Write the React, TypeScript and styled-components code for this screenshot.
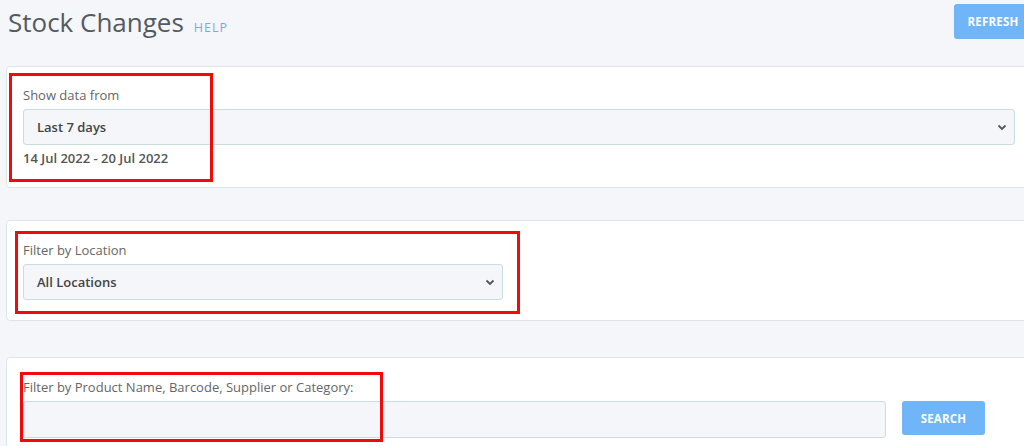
import * as React from "react";
import styled, { createGlobalStyle } from "styled-components";

const GlobalStyle = createGlobalStyle`
    html, body {
        margin: 0;
        padding: 0;
        background: #f4f6fa;
        overflow: hidden;
    }
    body {
        font-family: "Open Sans", "Liberation Sans", sans-serif;
        color: #555;
    }
`;

const Page = styled.div`
    position: relative;
    width: 1026px;
    margin-left: 6px;
    padding-top: 4px;
`;

const Header = styled.div`
    display: flex;
    justify-content: space-between;
    align-items: flex-start;
    height: 35px;
    margin-bottom: 27px;
    padding-left: 2px;
`;

const TitleRow = styled.div`
    display: flex;
    align-items: baseline;
    gap: 10px;
    margin-top: 1px;
`;

const Title = styled.h1`
    margin: 0;
    font-size: 26px;
    font-weight: 400;
    color: #555a60;
    line-height: 34px;
`;

const Help = styled.a`
    font-size: 12.5px;
    letter-spacing: 1px;
    color: #78a8f3;
    text-decoration: none;
`;

const Button = styled.button`
    border: none;
    border-radius: 3px;
    background: #6fb5f8;
    color: #fff;
    font-family: "Open Sans", "Liberation Sans", sans-serif;
    font-size: 11.5px;
    font-weight: 700;
    letter-spacing: 0.2px;
    height: ${props => props.height}px;
    width: ${props => props.width}px;
    padding: 0;
`;

const Card = styled.div`
    background: #fff;
    border: 1px solid #dce6ea;
    border-radius: 4px;
    padding: ${props => props.pad};
    margin-bottom: ${props => props.mb}px;
`;

const Label = styled.div`
    font-size: 13px;
    color: #666;
    line-height: 18px;
    margin-bottom: 5px;
`;

const SelectBox = styled.div`
    display: flex;
    align-items: center;
    justify-content: space-between;
    box-sizing: border-box;
    width: ${props => props.width};
    height: 36px;
    padding: 0 6px 0 13px;
    background: #f4f6fa;
    border: 1px solid #c9dce0;
    border-radius: 3px;
    font-size: 13px;
    font-weight: 600;
    color: #444;
`;

const DateRange = styled.div`
    margin-top: 4px;
    font-size: 13px;
    font-weight: 600;
    color: #555;
    line-height: 18px;
`;

const SearchRow = styled.div`
    display: flex;
    align-items: flex-start;
    gap: 16px;
    padding-right: 30px;
`;

const TextInput = styled.div`
    flex: 1;
    box-sizing: border-box;
    height: 37px;
    background: #f4f6fa;
    border: 1px solid #c9dce0;
    border-radius: 3px;
`;

const Marker = styled.div`
    position: absolute;
    box-sizing: border-box;
    border: 3px solid #f00a0a;
    left: ${props => props.x}px;
    top: ${props => props.y}px;
    width: ${props => props.w}px;
    height: ${props => props.h}px;
`;

const Chevron = () => (
    <svg width="12" height="12" viewBox="0 0 12 12">
        <path d="M2.5 4.5 L6 8 L9.5 4.5" fill="none" stroke="#555" strokeWidth="1.8" />
    </svg>
);

export default function App() {
    return (
        <>
            <GlobalStyle />
            <Page>
                <Header>
                    <TitleRow>
                        <Title>Stock Changes</Title>
                        <Help>HELP</Help>
                    </TitleRow>
                    <Button width={78} height={35}>REFRESH</Button>
                </Header>

                <Card pad="19px 16px 20px 16px" mb={32}>
                    <Label>Show data from</Label>
                    <SelectBox width="992px">
                        <span>Last 7 days</span>
                        <Chevron />
                    </SelectBox>
                    <DateRange>14 Jul 2022 - 20 Jul 2022</DateRange>
                </Card>

                <Card pad="20px 16px 20px 16px" mb={36}>
                    <Label>Filter by Location</Label>
                    <SelectBox width="480px">
                        <span>All Locations</span>
                        <Chevron />
                    </SelectBox>
                </Card>

                <Card pad="20px 16px 20px 16px" mb={0}>
                    <Label>Filter by Product Name, Barcode, Supplier or Category:</Label>
                    <SearchRow>
                        <TextInput />
                        <Button width={83} height={34}>SEARCH</Button>
                    </SearchRow>
                </Card>

                <Marker x={3} y={73} w={204} h={109} />
                <Marker x={9} y={231} w={505} h={83} />
                <Marker x={14} y={372} w={363} h={70} />
            </Page>
        </>
    );
}
